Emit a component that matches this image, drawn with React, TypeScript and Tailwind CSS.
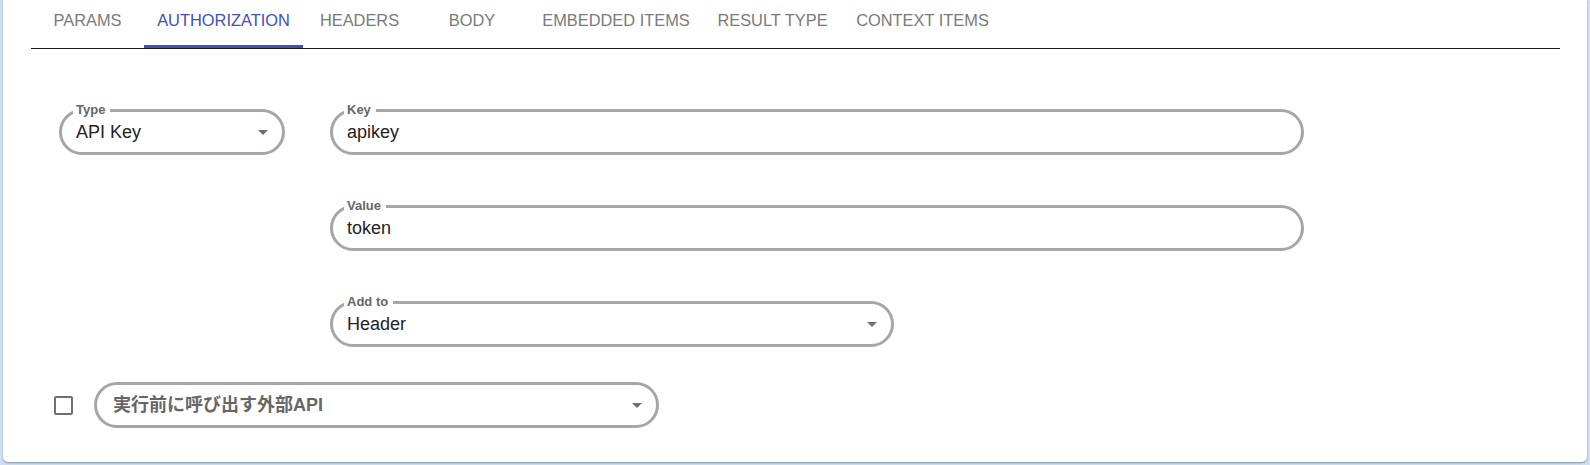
import React from "react";

const FONT = { fontFamily: '"Liberation Sans", "Noto Sans CJK JP", Arial, sans-serif' };

function Arrow() {
  return (
    <div className="w-0 h-0 border-l-[5px] border-r-[5px] border-t-[5px] border-l-transparent border-r-transparent border-t-[#6e6e6e]" />
  );
}

function Field({
  label,
  value,
  width,
  select,
  placeholder,
}: {
  label?: string;
  value: string;
  width: string;
  select?: boolean;
  placeholder?: boolean;
}) {
  return (
    <div
      className={`relative h-[46px] ${width} rounded-full border-[3px] border-[#a6a6a6] flex items-center ${
        placeholder ? "pl-[16px]" : "pl-[14px]"
      } pr-[14px]`}
    >
      {label && (
        <span className="absolute left-[11px] top-[-9px] bg-white pl-[3px] pr-[5px] text-[13px] leading-[14px] font-bold text-[#666]">
          {label}
        </span>
      )}
      <span
        className={
          placeholder
            ? "flex-1 text-[18px] font-bold text-[#666] leading-[22px]"
            : "flex-1 text-[18px] text-[#222] leading-[22px]"
        }
      >
        {value}
      </span>
      {select && <Arrow />}
    </div>
  );
}

const tabs: { label: string; w: string; active?: boolean }[] = [
  { label: "PARAMS", w: "w-[113px]" },
  { label: "AUTHORIZATION", w: "w-[159px]", active: true },
  { label: "HEADERS", w: "w-[113px]" },
  { label: "BODY", w: "w-[112px]" },
  { label: "EMBEDDED ITEMS", w: "w-[176px]" },
  { label: "RESULT TYPE", w: "w-[137px]" },
  { label: "CONTEXT ITEMS", w: "w-[163px]" },
];

export default function App() {
  return (
    <div className="w-[1590px] h-[465px] bg-[#cddff4] px-[3px] pb-[3px]" style={FONT}>
      <div className="h-[462px] bg-white rounded-b-[5px] shadow-[0_1px_2px_rgba(0,0,0,0.35)]">
        <div className="ml-[28px] mr-[27px] flex h-[49px] border-b border-[#1a1a1a]">
          {tabs.map((t) => (
            <div
              key={t.label}
              className={`relative h-[48px] ${t.w} shrink-0 pt-[10px] text-center text-[16.4px] leading-[20px] whitespace-nowrap ${
                t.active ? "text-[#3f51b5]" : "text-[#7a7a7a]"
              }`}
            >
              {t.label}
              {t.active && <div className="absolute left-0 right-0 bottom-0 h-[3px] bg-[#3f51b5]" />}
            </div>
          ))}
        </div>

        <div className="flex pt-[60px] pl-[56px]">
          <Field label="Type" value="API Key" width="w-[226px]" select />
          <div className="ml-[45px] flex flex-col gap-[50px]">
            <Field label="Key" value="apikey" width="w-[974px]" />
            <Field label="Value" value="token" width="w-[974px]" />
            <Field label="Add to" value="Header" width="w-[564px]" select />
          </div>
        </div>

        <div className="mt-[35px] pl-[51px] flex items-center">
          <div className="w-[19px] h-[19px] border-2 border-[#707070] rounded-[2px]" />
          <div className="ml-[21px]">
            <Field value="実行前に呼び出す外部API" width="w-[565px]" select placeholder />
          </div>
        </div>
      </div>
    </div>
  );
}
